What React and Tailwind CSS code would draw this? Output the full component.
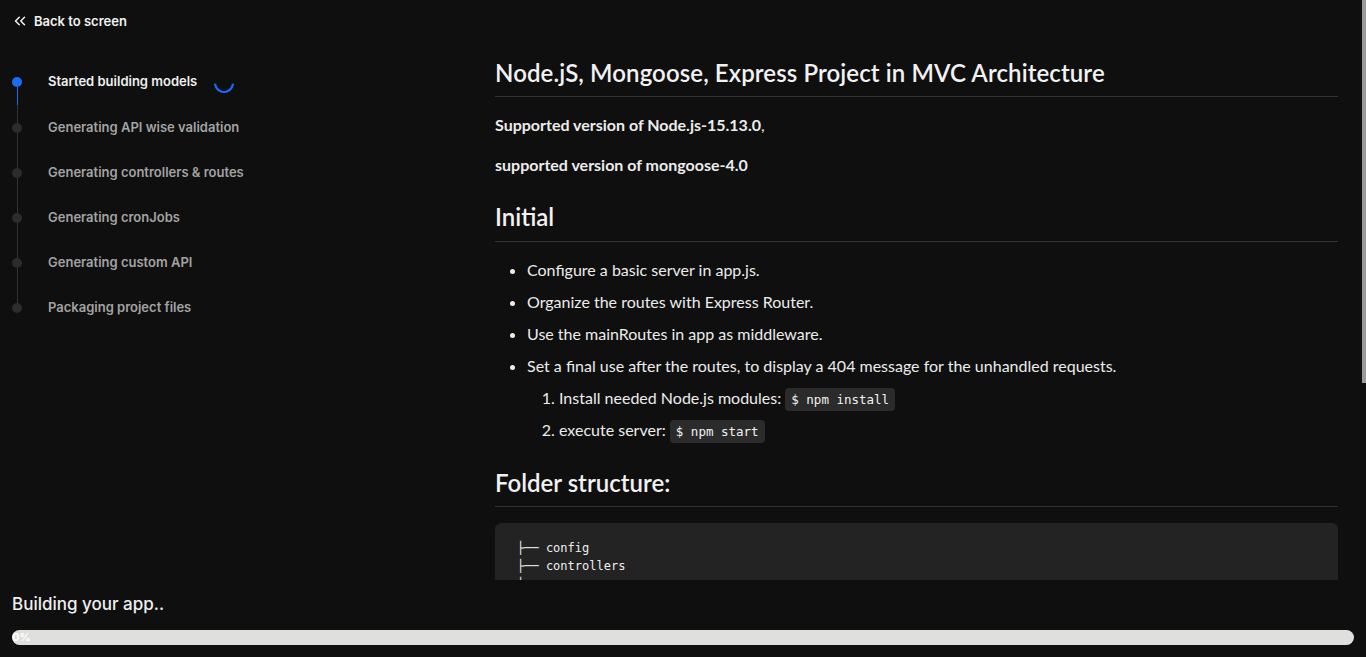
import React from "react";
import { ChevronsLeft } from "lucide-react";

const steps = [
  "Started building models",
  "Generating API wise validation",
  "Generating controllers & routes",
  "Generating cronJobs",
  "Generating custom API",
  "Packaging project files",
];

const tree = [
  "├── config",
  "├── controllers",
  "│",
  "│   ├── admin",
  "│   ├── device",
  "│   └── client",
  "├── helpers",
  "├── middleware",
  "├── models",
  "├── postman",
  "├── routes",
  "├── services",
  "├── utils",
  "├── app.js",
  "└── package.json",
];

function Spinner() {
  return (
    <svg width="22" height="22" viewBox="0 0 22 22" className="ml-[16px] mt-[2px] shrink-0">
      <path d="M19.86 12.56 A9 9 0 0 1 2.14 12.56" fill="none" stroke="#1a6cf5" strokeWidth="2.2" strokeLinecap="round" />
    </svg>
  );
}

function Code({ children }) {
  return (
    <code className="rounded-[4px] bg-[#2b2b2b] px-[6px] py-[4px] text-[12.5px] leading-none text-[#f2f2f2] [font-family:'DejaVu_Sans_Mono',monospace]">
      {children}
    </code>
  );
}

export default function App() {
  return (
    <div className="flex h-[657px] w-full flex-col overflow-hidden bg-[#0f0f0f] text-white">
      <div className="flex min-h-0 flex-1">
        {/* Sidebar */}
        <div className="flex w-[470px] shrink-0 flex-col [font-family:Inter,sans-serif]">
          <div className="flex items-center gap-[5px] pl-[11px] pt-[11px] text-[13px] font-semibold leading-[20px] text-[#f2f2f2]">
            <ChevronsLeft size={18} strokeWidth={2} />
            <span>Back to screen</span>
          </div>
          <div className="mt-[46px] flex flex-col">
            {steps.map((s, i) => {
              const active = i === 0;
              const last = i === steps.length - 1;
              return (
                <div key={s} className={`flex ${i === 0 ? "h-[46px]" : "h-[45px]"}`}>
                  <div className="flex w-[34px] shrink-0 flex-col items-center">
                    <div className={`h-[10px] w-[10px] shrink-0 rounded-full ${active ? "bg-[#1a6cf5]" : "bg-[#2c2c2c]"}`} />
                    {!last && (
                      <div className="flex w-px flex-1 flex-col">
                        {active && <div className="h-[18px] w-px bg-[#1a6cf5]" />}
                        <div className="w-px flex-1 bg-[#333333]" />
                      </div>
                    )}
                  </div>
                  <div className="ml-[14px] flex h-[10px] items-center">
                    <span className={`whitespace-nowrap text-[13px] font-semibold ${active ? "text-[#f0f0f0]" : "text-[#a3a3a3]"}`}>
                      {s}
                    </span>
                    {active && <Spinner />}
                  </div>
                </div>
              );
            })}
          </div>
        </div>

        {/* Content + scrollbar */}
        <div className="flex min-w-0 flex-1">
          <div className="min-w-0 flex-1 overflow-hidden pl-[25px] pr-6 pt-[57px] text-[#ececec] [font-family:Lato,sans-serif]">
            <h1 className="border-b border-[#333333] pb-[7px] text-[24px] font-semibold leading-[32px] tracking-[0.1px] text-[#f2f2f2]">
              Node.jS, Mongoose, Express Project in MVC Architecture
            </h1>
            <p className="mt-4 text-[16px] leading-[24px]">
              <strong className="font-bold">Supported version of Node.js-15.13.0</strong>,
            </p>
            <p className="mt-4 text-[16px] font-bold leading-[24px]">supported version of mongoose-4.0</p>
            <h2 className="mt-6 border-b border-[#333333] pb-[8px] text-[24px] font-semibold leading-[32px] text-[#f2f2f2]">
              Initial
            </h2>
            <ul className="mt-4 list-disc pl-8 text-[16px] leading-[24px]">
              <li>Configure a basic server in app.js.</li>
              <li className="mt-2">Organize the routes with Express Router.</li>
              <li className="mt-2">Use the mainRoutes in app as middleware.</li>
              <li className="mt-2">
                Set a final use after the routes, to display a 404 message for the unhandled requests.
                <ol className="list-decimal pl-8">
                  <li className="mt-2">
                    Install needed Node.js modules: <Code>$ npm install</Code>
                  </li>
                  <li className="mt-2">
                    execute server: <Code>$ npm start</Code>
                  </li>
                </ol>
              </li>
            </ul>
            <h2 className="mt-[25px] border-b border-[#333333] pb-[7px] text-[24px] font-semibold leading-[32px] text-[#f2f2f2]">
              Folder structure:
            </h2>
            <pre className="mt-4 mb-6 rounded-[6px] bg-[#232323] px-[22px] py-[16px] text-[12px] leading-[18px] text-[#f0f0f0] [font-family:'DejaVu_Sans_Mono',monospace]">
              {tree.join("\n")}
            </pre>
          </div>
          <div className="w-[4px] shrink-0">
            <div className="h-[383px] w-full bg-[#9a9a9a]" />
          </div>
        </div>
      </div>

      {/* Bottom */}
      <div className="shrink-0 px-3 pb-3 pt-[12px] [font-family:Inter,sans-serif]">
        <div className="text-[17px] font-medium leading-[24px] text-[#f0f0f0]">Building your app..</div>
        <div className="mt-[14px] h-[15px] w-full rounded-full bg-[#dfdfdd]">
          <div className="flex h-full w-0 items-center overflow-visible">
            <span className="whitespace-nowrap text-[11px] font-bold leading-none text-white">0%</span>
          </div>
        </div>
      </div>
    </div>
  );
}
